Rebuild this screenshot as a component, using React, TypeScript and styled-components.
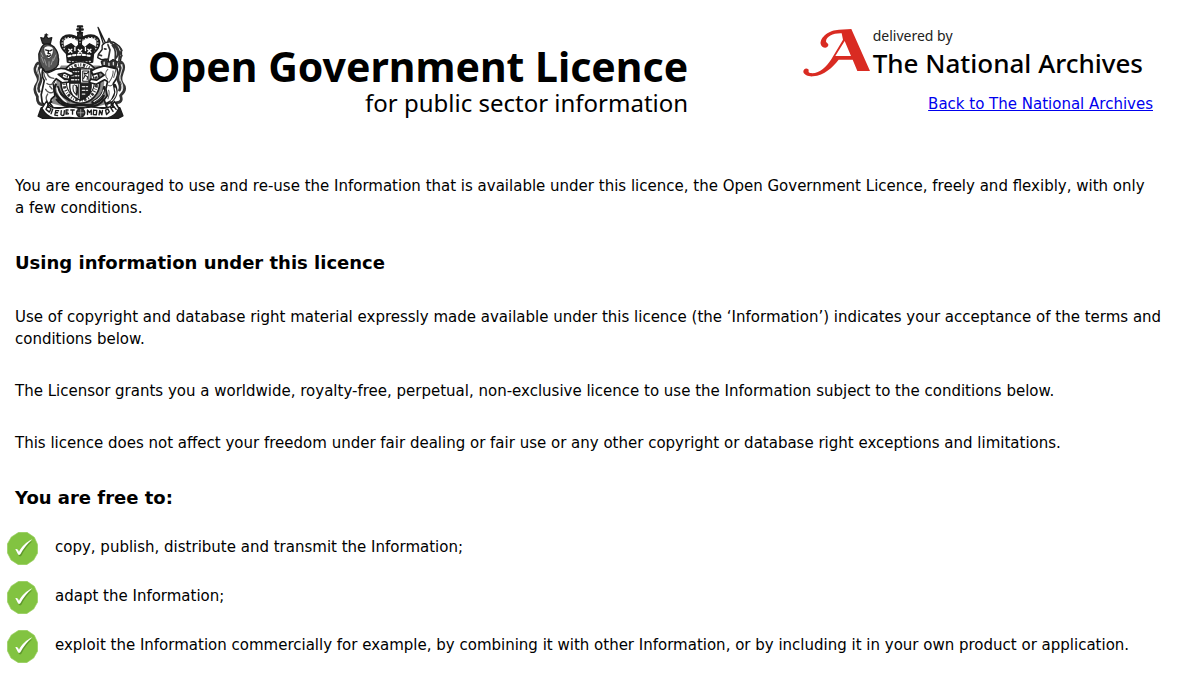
import React from "react";
import styled, { createGlobalStyle } from "styled-components";

const GlobalStyle = createGlobalStyle`
  body {
    margin: 0;
    background: #fff;
    color: #000;
    font-family: "DejaVu Sans", Verdana, sans-serif;
    font-size: 15px;
    line-height: 22px;
  }
`;

const Page = styled.div`
  padding: 24px 15px;
`;

const Header = styled.header`
  display: flex;
  justify-content: space-between;
  align-items: flex-start;
  padding: 0 12px 0 17px;
`;

const Brand = styled.div`
  display: flex;
  align-items: flex-start;
  gap: 21px;
`;

const Crest = styled.svg`
  display: block;
  flex: none;
  width: 95px;
  height: 100px;
`;

const BrandText = styled.div`
  font-family: "Noto Sans", sans-serif;
  text-align: right;
  white-space: nowrap;
  padding-top: 20px;
`;

const Title = styled.h1`
  margin: 0;
  font-size: 41px;
  line-height: 44px;
  font-weight: 700;
`;

const Tagline = styled.p`
  margin: 0;
  font-size: 24px;
  line-height: 30px;
`;

const Provider = styled.div`
  display: flex;
  flex-direction: column;
  align-items: flex-end;
  gap: 15px;
`;

const Archives = styled.div`
  display: flex;
  align-items: flex-end;
  gap: 2px;
  padding-right: 10px;
`;

const ArchivesMark = styled.svg`
  display: block;
  width: 68px;
  height: 54px;
`;

const ArchivesText = styled.div`
  font-family: "Noto Sans", sans-serif;
  white-space: nowrap;
`;

const Delivered = styled.div`
  font-size: 14px;
  line-height: 24px;
  color: #222;
`;

const ArchivesName = styled.div`
  font-size: 26px;
  line-height: 30px;
  font-weight: 500;
`;

const BackLink = styled.a`
  color: #0000ee;
`;

const Content = styled.main`
  padding-top: 51px;
`;

const Paragraph = styled.p`
  margin: 0 0 30px;
`;

const Heading = styled.h2`
  margin: 33px 0 32px;
  font-size: 18px;
  line-height: 22px;
  font-weight: 700;
`;

const Freedoms = styled.ul`
  display: flex;
  flex-direction: column;
  gap: 16px;
  list-style: none;
  margin: -9px 0 0 -8px;
  padding: 0;
`;

const Freedom = styled.li`
  display: flex;
  align-items: flex-start;
  gap: 17px;
`;

const Tick = styled.svg`
  display: block;
  flex: none;
  width: 31px;
  height: 33px;
`;

const FreedomText = styled.span`
  padding-top: 4px;
`;

function RoyalArms() {
  return (
    <Crest viewBox="33 28 279 294" preserveAspectRatio="none" role="img" aria-label="Royal coat of arms">
      <g fill="none" stroke="#1c1c1c" strokeWidth="4" strokeLinecap="round" strokeLinejoin="round">
        {/* shading behind the supporters */}
        <path d="M118 150c-10 20-16 40-12 60-10 16-14 34-14 52l84 22 82-22c0-18-4-36-14-52 4-20 0-40-12-60z" fill="#8a8a8a" stroke="none" />
        {/* crown */}
        <path d="M174 36v20M166 44h16M168 35h12M168 54h12" strokeWidth="7" />
        <circle cx="174" cy="63" r="7" fill="#333" />
        <path d="M134 110c-16-14-18-32-8-41 12-10 34-6 48 8 14-14 36-18 48-8 10 9 8 27-8 41" strokeWidth="11" />
        <path d="M134 108c-14-14-16-29-7-36 11-8 32-4 46 9M214 108c14-14 16-29 7-36-11-8-32-4-46 9" stroke="#ddd" strokeDasharray="1 8" />
        <path d="M174 72v36" strokeWidth="12" />
        <path d="M174 74v32" stroke="#ddd" strokeDasharray="1 8" />
        <path d="M132 94l16-8 14 12 12-12 14 12 14-12 14 8-5 46c-24 8-50 8-74 0z" fill="#1a1a1a" />
        <path d="M141 102l9 9M150 102l-9 9M169 103l10 10M179 103l-10 10M197 102l9 9M206 102l-9 9M159 97v9M190 97v9" stroke="#fff" />
        <path d="M140 123c22-6 46-6 68 0" stroke="#fff" strokeWidth="6" strokeDasharray="7 7" />
        <path d="M142 137c22 5 44 5 66 0" stroke="#ccc" strokeDasharray="3 7" />
        {/* garter and shield */}
        <ellipse cx="175" cy="200" rx="57" ry="61" fill="#fff" strokeWidth="5" />
        <ellipse cx="175" cy="200" rx="48" ry="52" strokeWidth="9" stroke="#333" strokeDasharray="3 5 7 4 2 5" strokeLinecap="butt" />
        <ellipse cx="175" cy="200" rx="41" ry="45" fill="#fff" strokeWidth="3" />
        <path d="M144 160h62v54c0 20-14 32-31 38-17-6-31-18-31-38z" fill="#fff" />
        <path d="M144 160h31v42h-31zM175 202h31v12c0 20-14 32-31 38z" fill="#222" />
        <path d="M149 168h21M149 180h21M149 192h21M181 212h20M181 223h18M181 234h11" stroke="#ddd" strokeDasharray="7 5 3 5" strokeWidth="4" />
        <path d="M182 166h18v30h-18zM185 188l4-10-3-6 8 2 4-5M189 179l7 4-1 8M154 208c-2 10 0 22 10 29M158 207c12 4 9 14 7 30M163 208v29M169 206v38" strokeWidth="3" />
        {/* lion */}
        <path d="M64 84l-5-16 9 3 5-10 7 10 11-3-4 17c-7 3-16 3-23-1z" fill="#333" strokeWidth="4" />
        <path d="M75 57v8M71 60h8" strokeWidth="4" />
        <path d="M67 89c-10 9-10 19-14 27 1 11-1 20 3 28 4 13 9 18 15 24 14 1 33-8 39-21-1-8 4-12 0-20 1-12-3-20-12-31-9-8-22-12-31-7z" fill="#555" strokeWidth="4" />
        <path d="M68 97c8-7 20-6 27 1 3 10-2 25-12 32-10-4-17-20-15-33z" fill="#fff" strokeWidth="2" />
        <path d="M73 104l7 2M86 107l6-3M82 106l-2 9h6M77 121c5 4 8 2 11-2" strokeWidth="4" />
        <path d="M61 126l6 15M70 133l5 16M83 139v15M95 130l-6 18M103 119l-7 17M60 113l5 11" stroke="#bbb" strokeWidth="2" />
        <path d="M65 159c-4 15-3 26 4 35l-5 24-4 18 3 23 14 15 17-2-8-10 4-14 10-9-2-20-3-18 9-12 18 12 18-2 4-9-15 1-19-15 19-4 18 8 9-3-4-8-21-9c-16-3-31 0-43 8-10 6-17 3-23-9z" fill="#fff" strokeWidth="5" />
        <path d="M77 172c3 11 9 15 20 16M77 203c8 6 17 3 22-4M73 220c6 10 17 13 23 7M79 234c-7 9-5 18 1 26M67 170c1 10 4 16 8 22M85 211l7 8" strokeWidth="4" stroke="#555" />
        <path d="M103 206c-8 14-4 26 6 36l20 24M109 214c4 18 18 30 34 38" strokeWidth="7" />
        <path d="M106 216c2 16 12 30 28 42" stroke="#fff" strokeWidth="4" />
        <path d="M63 266c-14-4-15-16-14-24-7-11-13-23-3-36 10-13 4-21-1-31-6-12-4-25 5-32 8-2 9 10 3 16-5 10 8 23 6 36-2 12-12 19-5 31" strokeWidth="8" stroke="#333" />
        <path d="M50 150c-6 16 10 23 4 43-3 11-12 17-6 31" stroke="#ddd" strokeWidth="3" />
        {/* unicorn */}
        <path d="M244 90l-17-52M250 86L228 40" strokeWidth="4" />
        <path d="M239 91c8-12 29-15 42-4 16 8 17 25 13 42l-5 25-30 2-2-25-20 2-11-6 2-10 11-14z" fill="#fff" strokeWidth="4" />
        <path d="M255 82l4-11 6 12M265 84c18 10 25 31 15 44M276 87c17 16 14 29 12 52M256 89l6 15-5 27M246 101l4 1M231 119l6 2M269 91c12 13 9 28 8 45M292 98l5 8-5 7 5 8-6 8" strokeWidth="5" stroke="#333" />
        <path d="M236 139l12-8 11 9 12-8 13 7-5 16-38-1z" fill="#333" strokeWidth="3" />
        <path d="M245 140v8M259 143v8M272 141v7" stroke="#ddd" />
        <path d="M246 151c-14 4-30 6-39 16l5 10 24-7 9 8-22 15-18-3-4 10 21 5 24-13 9 5-5 22 4 20-9 12 8 24 19 1-6-12 3-17 8-17-5-28c11-13 16-27 11-42z" fill="#fff" strokeWidth="5" />
        <path d="M256 161c-9 8-9 21-1 29M271 166c2 13-4 23-12 34M255 207c7 5 12 3 15-2M258 223c4 9 2 14-2 25M253 258c-2 8 0 11 4 15M280 160l-7 25" strokeWidth="3" stroke="#555" />
        <path d="M245 214c0 20-16 34-34 44M276 208c12 22-2 46-22 54" strokeWidth="8" />
        <path d="M243 222c-2 16-14 26-28 34M277 216c8 18-4 34-16 42" stroke="#fff" strokeWidth="3" />
        <path d="M282 259c17-1 14-13 11-21 9-8 17-21 7-33-10-10-6-22-2-33 5-11 6-25-3-32-6 0-8 8-3 15 5 10-6 18-7 31-1 15 12 20 5 36" strokeWidth="8" stroke="#333" />
        <path d="M297 147c6 16-9 24-5 43 3 11 12 17 6 31" stroke="#ddd" strokeWidth="3" />
        {/* compartment and motto scroll */}
        <path d="M106 240c6 14 24 22 40 26h58c16-4 32-10 40-27M105 250c14 22 40 19 65 25M244 250c-14 22-35 19-58 25" strokeWidth="6" />
        <path d="M60 274l-9 25 12 6h224l13-7-9-24z" fill="#222" />
        <path d="M62 276c8 14 19 26 35 28 22 2 44-5 62 0h34c22-5 43 2 62 0 19-3 28-16 33-28l-13-21c-7 19-23 23-42 20-23-4-42-5-57 5-15-10-34-9-58-5-22 3-36-3-42-20z" fill="#fff" strokeWidth="4" />
        <path d="M91 257c-7 2-12 8-12 14M261 257c7 2 10 8 9 14" strokeWidth="5" />
        <g strokeWidth="4">
          <path d="M79 269l-5 10 10 8 5-10zM94 278l-5 14M103 282l-3 14 8 1M103 282l8 1M102 289h6M119 283l-1 11c2 4 8 4 9 0l1-11M139 281h-6v12l7-1M133 287h5M147 281h10M152 281v12" />
          <path d="M196 294v-13l6 7 5-7v13M214 281l9 1-1 13-9-1zM230 295l2-13 6 13 2-13M249 281l3 13 8-8-4-8zM264 274l7 11M266 274l9-2M271 268l9 11M279 260l6 10" />
        </g>
        <circle cx="176" cy="289" r="12" fill="#333" />
        <path d="M176 279v20M167 289h18" stroke="#bbb" strokeWidth="2" />
      </g>
    </Crest>
  );
}

function ArchivesLogo() {
  return (
    <ArchivesMark viewBox="27 27 204 162" aria-hidden="true">
      <path
        fill="#d92b22"
        d="M135 44L172 42L228 168H190L176 134H134C115 157 92 181 57 184C44 185 30 180 28 171C27 163 36 157 42 162C47 166 40 171 48 174C75 178 96 156 111 134L147 74L143 55C118 54 97 64 96 79C96 84 104 85 103 91C100 103 82 99 80 87C78 65 107 45 135 44ZM152 78L124 123H171Z"
      />
    </ArchivesMark>
  );
}

function TickIcon() {
  return (
    <Tick viewBox="0 0 93 99" aria-hidden="true">
      <path d="M35 1h25l22 15 10 22v25L80 84 59 98H34L12 84 1 62V36L13 15z" fill="#82c341" stroke="#9bd064" strokeWidth="2" strokeLinejoin="round" />
      <path d="M26 54c4-3 8-1 11 7C45 47 57 33 75 25 60 38 50 51 41 69c-3 3-5 3-7 0z" fill="#5f982c" transform="translate(2 2)" />
      <path d="M25 52c4-3 8-1 11 7C44 45 57 30 76 22 60 36 49 50 40 67c-3 3-5 3-7 0z" fill="#fff" />
    </Tick>
  );
}

const freedoms = [
  "copy, publish, distribute and transmit the Information;",
  "adapt the Information;",
  "exploit the Information commercially for example, by combining it with other Information, or by including it in your own product or application.",
];

export default function App() {
  return (
    <>
      <GlobalStyle />
      <Page>
        <Header>
          <Brand>
            <RoyalArms />
            <BrandText>
              <Title>Open Government Licence</Title>
              <Tagline>for public sector information</Tagline>
            </BrandText>
          </Brand>
          <Provider>
            <Archives>
              <ArchivesLogo />
              <ArchivesText>
                <Delivered>delivered by</Delivered>
                <ArchivesName>The National Archives</ArchivesName>
              </ArchivesText>
            </Archives>
            <BackLink href="#">Back to The National Archives</BackLink>
          </Provider>
        </Header>
        <Content>
          <Paragraph>
            You are encouraged to use and re-use the Information that is available under this licence, the Open
            Government Licence, freely and flexibly, with only a&nbsp;few conditions.
          </Paragraph>
          <Heading>Using information under this licence</Heading>
          <Paragraph>
            Use of copyright and database right material expressly made available under this licence (the
            ‘Information’) indicates your acceptance of the terms and conditions below.
          </Paragraph>
          <Paragraph>
            The Licensor grants you a worldwide, royalty-free, perpetual, non-exclusive licence to use the Information
            subject to the conditions below.
          </Paragraph>
          <Paragraph>
            This licence does not affect your freedom under fair dealing or fair use or any other copyright or database
            right exceptions and limitations.
          </Paragraph>
          <Heading>You are free to:</Heading>
          <Freedoms>
            {freedoms.map((text) => (
              <Freedom key={text}>
                <TickIcon />
                <FreedomText>{text}</FreedomText>
              </Freedom>
            ))}
          </Freedoms>
        </Content>
      </Page>
    </>
  );
}
